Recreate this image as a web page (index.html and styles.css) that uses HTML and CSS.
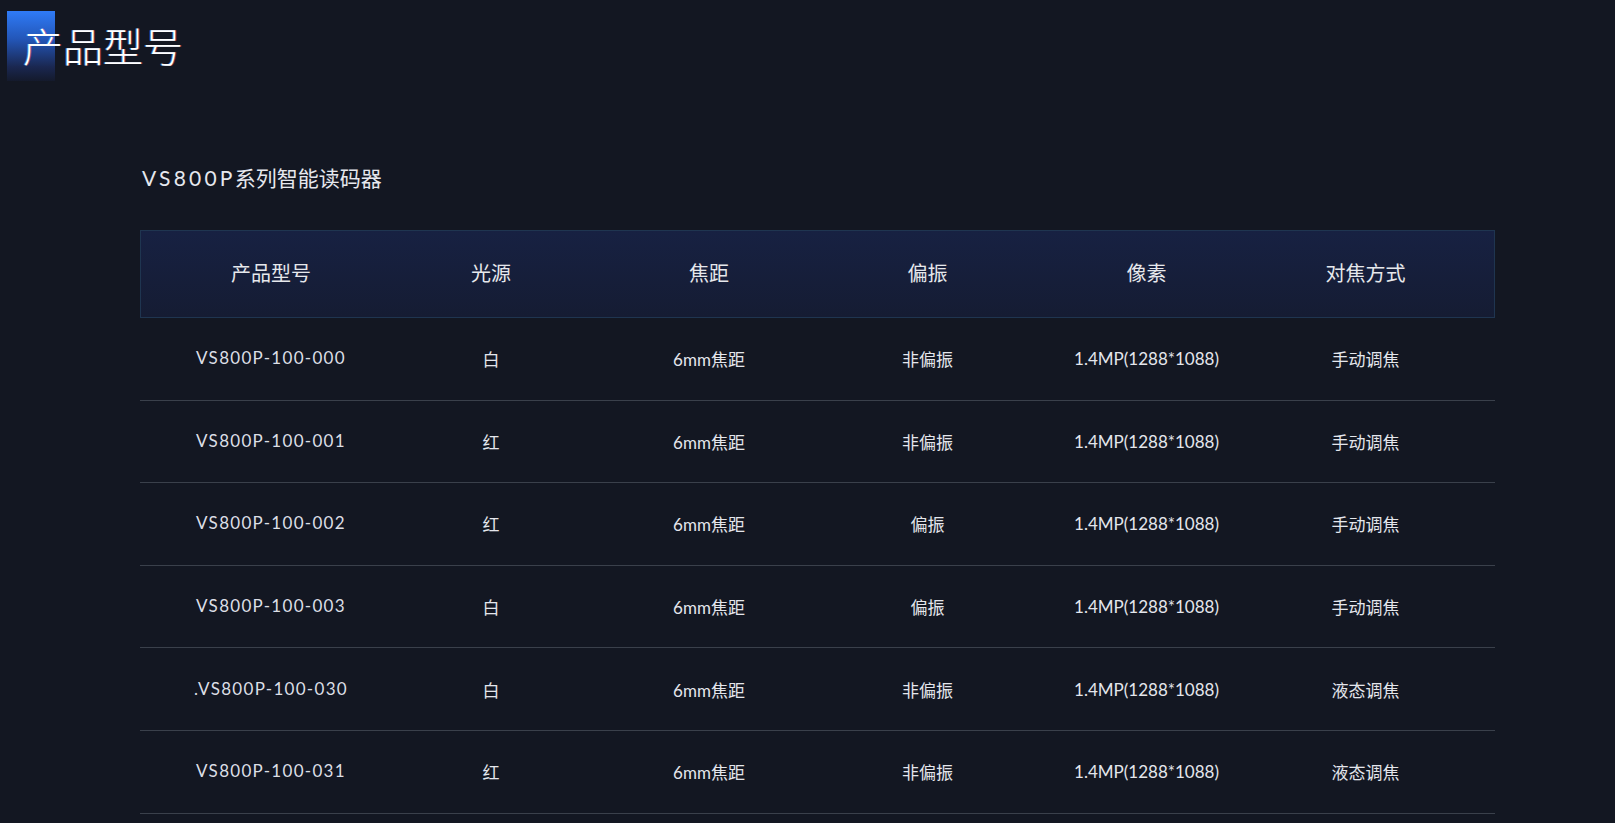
FILE: index.html
```html
<!DOCTYPE html>
<html lang="zh-CN">
<head>
<meta charset="utf-8">
<title>产品型号</title>
<link rel="stylesheet" href="styles.css">
</head>
<body>
<header class="page-head">
  <h1 class="page-title">产品型号</h1>
</header>
<main class="content">
  <h2 class="series"><span class="series-code">VS800P</span>系列智能读码器</h2>
  <div class="table">
    <div class="row head">
      <div class="cell">产品型号</div>
      <div class="cell">光源</div>
      <div class="cell">焦距</div>
      <div class="cell">偏振</div>
      <div class="cell">像素</div>
      <div class="cell">对焦方式</div>
    </div>
    <div class="row">
      <div class="cell model">VS800P-100-000</div>
      <div class="cell">白</div>
      <div class="cell">6mm焦距</div>
      <div class="cell">非偏振</div>
      <div class="cell">1.4MP(1288*1088)</div>
      <div class="cell">手动调焦</div>
    </div>
    <div class="row">
      <div class="cell model">VS800P-100-001</div>
      <div class="cell">红</div>
      <div class="cell">6mm焦距</div>
      <div class="cell">非偏振</div>
      <div class="cell">1.4MP(1288*1088)</div>
      <div class="cell">手动调焦</div>
    </div>
    <div class="row">
      <div class="cell model">VS800P-100-002</div>
      <div class="cell">红</div>
      <div class="cell">6mm焦距</div>
      <div class="cell">偏振</div>
      <div class="cell">1.4MP(1288*1088)</div>
      <div class="cell">手动调焦</div>
    </div>
    <div class="row">
      <div class="cell model">VS800P-100-003</div>
      <div class="cell">白</div>
      <div class="cell">6mm焦距</div>
      <div class="cell">偏振</div>
      <div class="cell">1.4MP(1288*1088)</div>
      <div class="cell">手动调焦</div>
    </div>
    <div class="row">
      <div class="cell model">.VS800P-100-030</div>
      <div class="cell">白</div>
      <div class="cell">6mm焦距</div>
      <div class="cell">非偏振</div>
      <div class="cell">1.4MP(1288*1088)</div>
      <div class="cell">液态调焦</div>
    </div>
    <div class="row">
      <div class="cell model">VS800P-100-031</div>
      <div class="cell">红</div>
      <div class="cell">6mm焦距</div>
      <div class="cell">非偏振</div>
      <div class="cell">1.4MP(1288*1088)</div>
      <div class="cell">液态调焦</div>
    </div>
  </div>
</main>
</body>
</html>
```

FILE: styles.css
```css
html, body {
  margin: 0;
  padding: 0;
}
body {
  background: #131722;
  color: #e2e4ea;
  font-family: Lato, "Noto Sans CJK SC", sans-serif;
  overflow: hidden;
  height: 823px;
}
.page-head {
  padding: 11px 0 0 7px;
}
.page-title {
  margin: 0;
  height: 70px;
  line-height: 68px;
  padding-left: 16px;
  font-size: 40px;
  font-weight: 300;
  color: #ffffff;
  font-family: "Noto Sans CJK SC", sans-serif;
  background: linear-gradient(180deg, #2f7bf7 0%, #2356b8 40%, #1a2750 80%, #141a2c 100%) no-repeat;
  background-size: 48px 70px;
  text-shadow: -1px 0 0 rgba(80, 170, 255, 0.6), 1px 0 0 rgba(255, 90, 120, 0.45);
}
.content {
  margin-left: 140px;
  width: 1355px;
}
.series {
  margin: 82px 0 0 2px;
  font-size: 21px;
  line-height: 30px;
  font-weight: 400;
  color: #e6e8ee;
}
.series-code {
  letter-spacing: 3.2px;
  margin-right: -1px;
}
.table {
  margin-top: 37px;
}
.row {
  display: grid;
  grid-template-columns: 222px 218px 218px 219px 219px 219px;
  padding: 0 20px;
  box-sizing: border-box;
  height: 82.6px;
  align-items: center;
  border-bottom: 1px solid #3a404b;
  font-size: 17px;
  font-weight: 400;
  color: #e4e6ec;
}
.row.head {
  height: 88px;
  border: 1px solid #1f3550;
  background: linear-gradient(180deg, #172142 0%, #151c33 100%);
  font-size: 20px;
  color: #e6e8ec;
  padding: 0 19px 3px 19px;
}
.cell {
  text-align: center;
  white-space: nowrap;
}
.model {
  color: #dcdfe6;
  letter-spacing: 1.3px;
  padding-bottom: 2px;
}
```
